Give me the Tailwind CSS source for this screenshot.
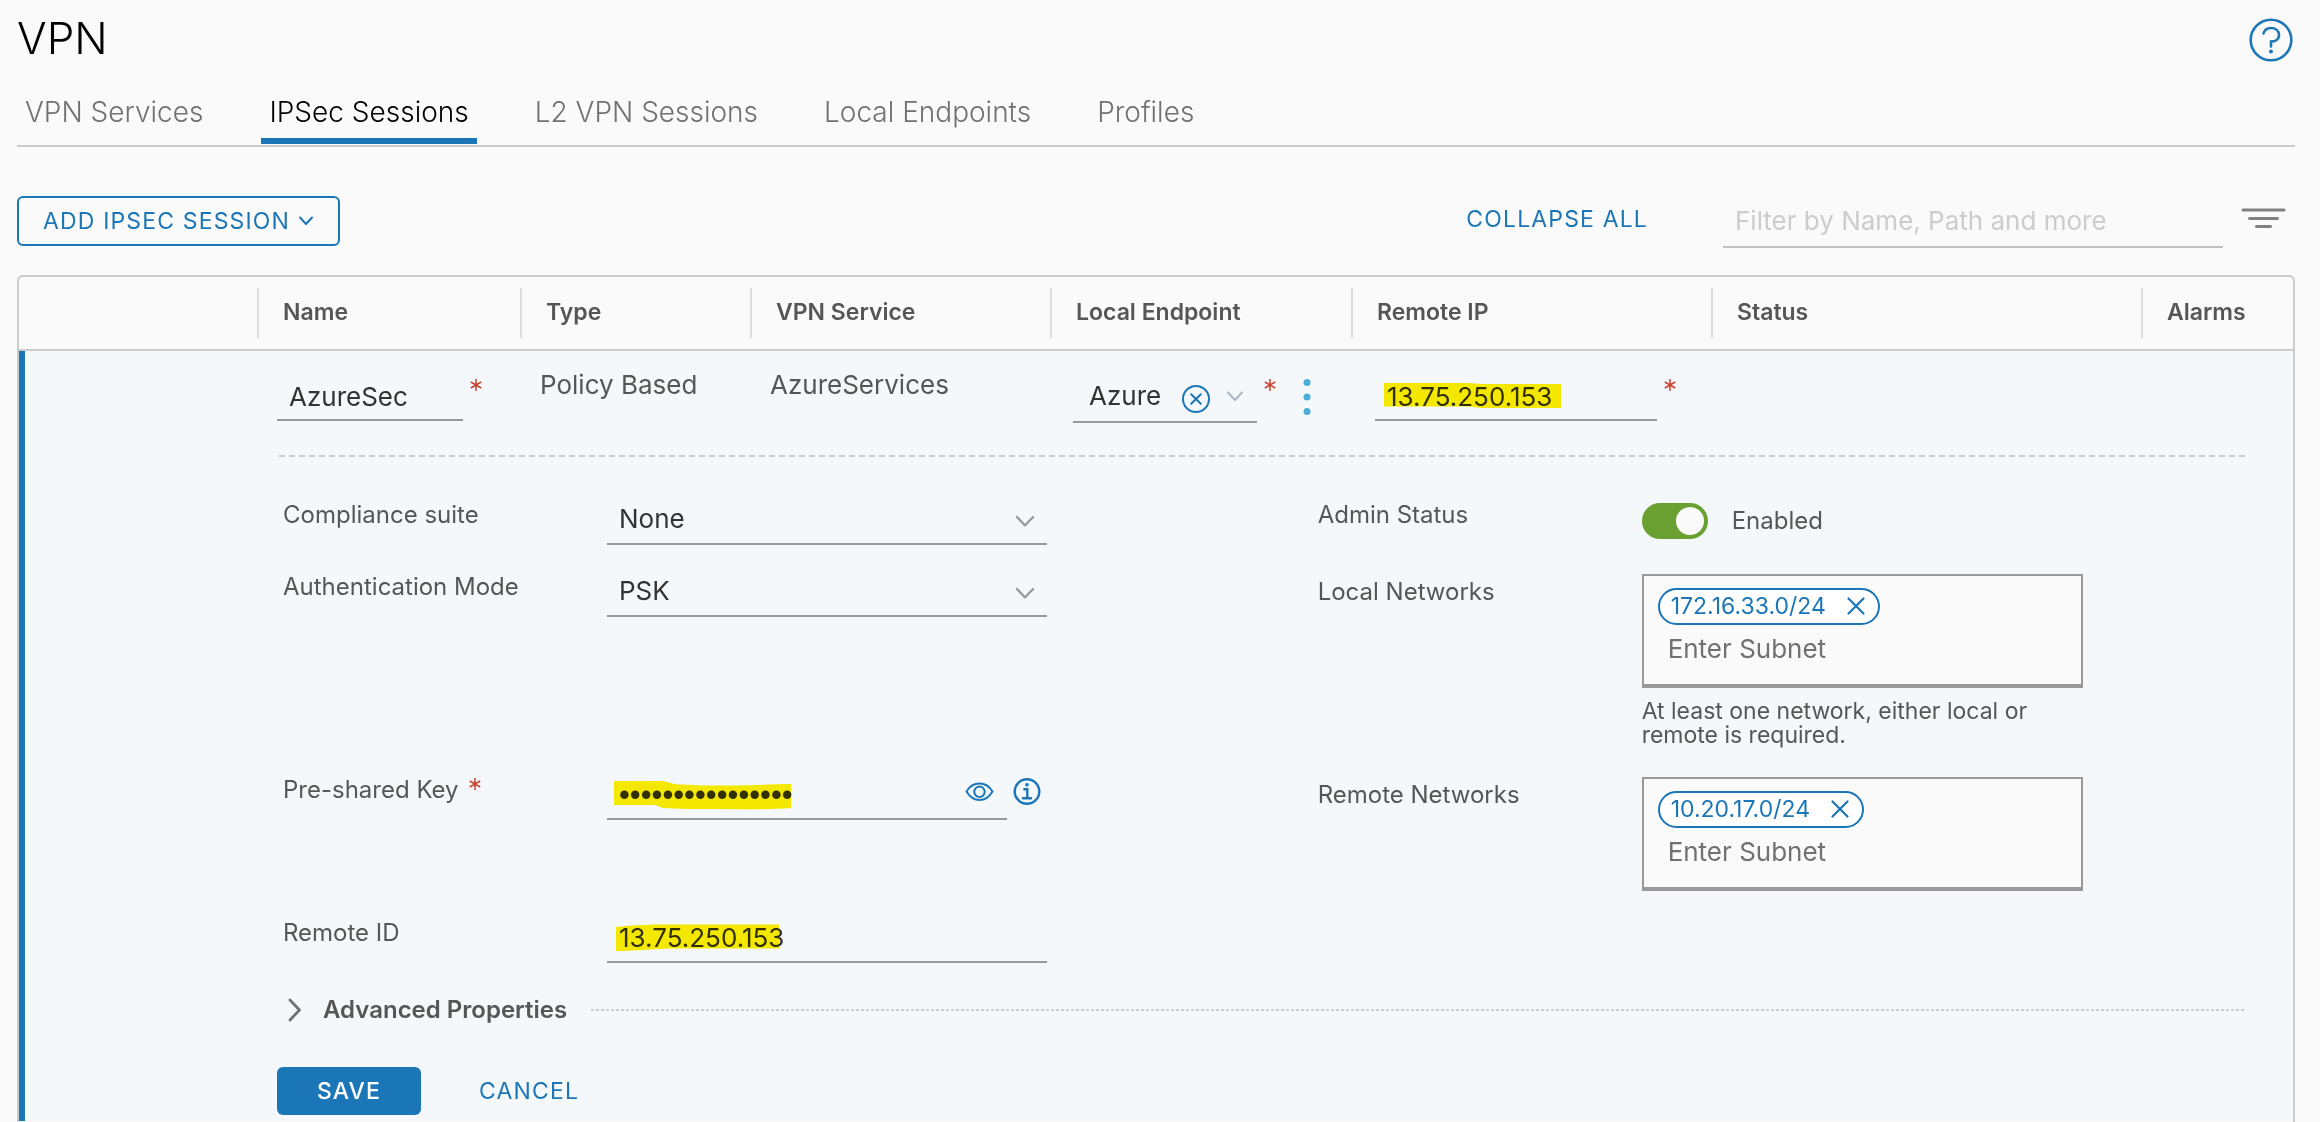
<!DOCTYPE html>
<html lang="en">
<head>
    <meta charset="UTF-8">
    <meta name="viewport" content="width=device-width, initial-scale=1.0">
    <title>VPN - IPSec Sessions</title>
    <script src="https://cdn.jsdelivr.net/npm/@tailwindcss/browser@4"></script>
</head>
<body class="bg-[#fafafa] font-['Inter','Open_Sans',sans-serif] text-[#565656]">
    <div class="min-h-screen flex flex-col pl-[17px] pr-[25px]">
        <!-- Header -->
        <header class="flex items-center justify-between h-20">
            <h1 class="pb-1 text-[44px] leading-[52px] font-light text-black">VPN</h1>
            <button type="button" aria-label="Help" class="text-[#1b76b7]">
                <svg class="w-12 h-12" viewBox="0 0 48 48" fill="none" stroke="currentColor" stroke-width="2.6" stroke-linecap="round">
                    <circle cx="24" cy="24" r="20.3"/>
                    <path d="M16.500 17.500c1-4 4-5.500 7.500-5.500 4.700 0 8 2.700 8 6.900 0 4.400-4 6.600-8 6.600v5"/>
                    <circle cx="24" cy="35.500" r="2" fill="currentColor" stroke="none"/>
                </svg>
            </button>
        </header>

        <!-- Tabs -->
        <nav class="flex gap-[50px] h-[67px] border-b-2 border-[#ccc] text-[28px] leading-8 font-light text-[#717171]">
            <a href="#" class="px-2 pt-4 mb-px">VPN Services</a>
            <a href="#" class="px-2 pt-4 mb-px border-b-6 border-[#1b76b7] text-black">IPSec Sessions</a>
            <a href="#" class="px-2 pt-4 mb-px">L2 VPN Sessions</a>
            <a href="#" class="px-2 pt-4 mb-px">Local Endpoints</a>
            <a href="#" class="px-2 pt-4 mb-px">Profiles</a>
        </nav>

        <!-- Toolbar -->
        <div class="flex items-start mt-12 mb-[27px] h-[53px] text-[#1b76b7]">
            <button type="button" class="flex items-center gap-2 h-[50px] mt-px px-6 border-2 border-[#1b76b7] rounded-md text-[23px] tracking-wider">
                ADD IPSEC SESSION
                <svg class="w-4 h-4" viewBox="0 0 16 16" fill="none" stroke="currentColor" stroke-width="2" stroke-linecap="round" stroke-linejoin="round"><path d="M2 4.500l6 6.500 6-6.500"/></svg>
            </button>
            <button type="button" class="h-12 ml-auto mr-[75px] text-[23px] tracking-wider">COLLAPSE ALL</button>
            <input type="text" aria-label="Filter" placeholder="Filter by Name, Path and more" class="w-[500px] h-full px-3 border-b-2 border-[#c1c1c1] bg-transparent text-[26px] text-[#333] placeholder:text-[#ccc] outline-none">
            <button type="button" aria-label="Filter options" class="flex items-center h-12 ml-4 mr-2 text-[#808080]">
                <svg class="w-12 h-8" viewBox="0 0 48 32" fill="none" stroke="currentColor" stroke-width="3" stroke-linecap="round"><path d="M4 7h41M10.500 15.500h28M17.500 23.500h14"/></svg>
            </button>
        </div>

        <!-- Sessions -->
        <div class="flex-1 border-2 border-b-0 border-[#ccc] rounded-t-md overflow-hidden">
            <table class="w-full table-fixed border-separate border-spacing-0 text-left">
                <colgroup>
                    <col class="w-[238px]">
                    <col class="w-[263px]">
                    <col class="w-[230px]">
                    <col class="w-[300px]">
                    <col class="w-[301px]">
                    <col class="w-[360px]">
                    <col>
                    <col class="w-[152px]">
                </colgroup>
                <thead class="text-[23px] leading-[48px]">
                    <tr>
                        <td class="h-[74px] p-0 border-b-2 border-[#ccc]"></td>
                        <th class="p-0 border-b-2 border-[#ccc] font-semibold"><div class="pl-6 pb-0.5 border-l-2 border-[#ddd]">Name</div></th>
                        <th class="p-0 border-b-2 border-[#ccc] font-semibold"><div class="pl-6 pb-0.5 border-l-2 border-[#ddd]">Type</div></th>
                        <th class="p-0 border-b-2 border-[#ccc] font-semibold"><div class="pl-6 pb-0.5 border-l-2 border-[#ddd]">VPN Service</div></th>
                        <th class="p-0 border-b-2 border-[#ccc] font-semibold"><div class="pl-6 pb-0.5 border-l-2 border-[#ddd]">Local Endpoint</div></th>
                        <th class="p-0 border-b-2 border-[#ccc] font-semibold"><div class="pl-6 pb-0.5 border-l-2 border-[#ddd]">Remote IP</div></th>
                        <th class="p-0 border-b-2 border-[#ccc] font-semibold"><div class="pl-6 pb-0.5 border-l-2 border-[#ddd]">Status</div></th>
                        <th class="p-0 border-b-2 border-[#ccc] font-semibold"><div class="pl-6 pb-0.5 border-l-2 border-[#ddd]">Alarms</div></th>
                    </tr>
                </thead>
                <tbody class="bg-[#f4f8fb] text-[26px] leading-8 align-top">
                    <tr>
                        <td class="h-[104px] p-0 border-l-6 border-[#1b76b7]"></td>
                        <td class="p-0 pl-5 pt-[22px]">
                            <div class="flex gap-[7px]">
                                <input type="text" aria-label="Name" value="AzureSec" class="w-[186px] h-12 px-3 border-b-2 border-[#999] bg-transparent text-[#333] outline-none">
                                <svg class="w-3 h-3 mt-1.5" viewBox="0 0 12 12" fill="none" stroke="#c9402c" stroke-width="1.500"><path d="M6 0v12M.800 3l10.400 6M.800 9l10.400-6"/></svg>
                            </div>
                        </td>
                        <td class="p-0 pl-5 pt-[18px]">Policy Based</td>
                        <td class="p-0 pl-5 pt-[18px]">AzureServices</td>
                        <td class="p-0 pl-[23px] pt-[22px]">
                            <div class="flex gap-[7px]">
                                <div class="relative w-[184px]">
                                    <select aria-label="Local endpoint" class="appearance-none w-full h-[50px] pl-4 pb-0.5 border-b-2 border-[#999] bg-transparent text-[#333] outline-none">
                                        <option>Azure</option>
                                    </select>
                                    <button type="button" aria-label="Clear endpoint" class="absolute left-[109px] top-3 text-[#1b76b7]">
                                        <svg class="w-7 h-7" viewBox="0 0 28 28" fill="none" stroke="currentColor" stroke-width="2" stroke-linecap="round"><circle cx="14" cy="14" r="13"/><path d="M9.200 9.200l9.600 9.600M18.800 9.200l-9.600 9.600"/></svg>
                                    </button>
                                    <svg class="absolute right-3 top-[14px] w-5 h-5 pointer-events-none" viewBox="0 0 20 20" fill="none" stroke="#adbbc4" stroke-width="2.200" stroke-linecap="round" stroke-linejoin="round"><path d="M3 5.500l7 7.500 7-7.500"/></svg>
                                </div>
                                <svg class="w-3 h-3 mt-1.5" viewBox="0 0 12 12" fill="none" stroke="#c9402c" stroke-width="1.500"><path d="M6 0v12M.800 3l10.400 6M.800 9l10.400-6"/></svg>
                                <button type="button" aria-label="Endpoint actions" class="ml-3 pt-1 self-start text-[#49afd9]">
                                    <svg class="w-6 h-10" viewBox="0 0 24 40" fill="currentColor"><circle cx="12" cy="5.500" r="3.500"/><circle cx="12" cy="20" r="3.500"/><circle cx="12" cy="34.500" r="3.500"/></svg>
                                </button>
                            </div>
                        </td>
                        <td class="p-0 pl-6 pt-[22px]">
                            <div class="relative flex gap-[7px]">
                                <input type="text" aria-label="Remote IP" value="13.75.250.153" class="w-[282px] h-12 px-3 border-b-2 border-[#999] bg-transparent text-[#333] outline-none">
                                <svg class="absolute left-2 top-2 w-[180px] h-8 mix-blend-multiply pointer-events-none" viewBox="0 0 180 32"><path d="M1 2h84l14 1h79v24h-79l-14-1.500H1z" fill="#ffef00"/></svg>
                                <svg class="w-3 h-3 mt-1.5" viewBox="0 0 12 12" fill="none" stroke="#c9402c" stroke-width="1.500"><path d="M6 0v12M.800 3l10.400 6M.800 9l10.400-6"/></svg>
                            </div>
                        </td>
                        <td class="p-0"></td>
                        <td class="p-0"></td>
                    </tr>
                    <tr>
                        <td colspan="8" class="p-0 pl-[252px] pr-12 border-l-6 border-[#1b76b7]">
                            <div class="ml-0.5 border-t-2 border-dashed border-[#ccc]"></div>
                            <form class="pt-10 pb-1.5">
                                <div class="flex pl-1.5">
                                    <!-- Left column -->
                                    <div class="flex flex-col gap-6">
                                        <div class="flex">
                                            <label for="suite" class="w-[324px] pt-0.5 text-[24px]">Compliance suite</label>
                                            <div class="relative w-[440px]">
                                                <select id="suite" class="appearance-none w-full h-12 px-3 pb-0.5 border-b-2 border-[#999] bg-transparent text-[#333] outline-none">
                                                    <option>None</option>
                                                </select>
                                                <svg class="absolute right-3 top-[14px] w-5 h-5 pointer-events-none" viewBox="0 0 20 20" fill="none" stroke="#999" stroke-width="2.400" stroke-linecap="round" stroke-linejoin="round"><path d="M2 6l8 8.500L18 6"/></svg>
                                            </div>
                                        </div>
                                        <div class="flex">
                                            <label for="auth" class="w-[324px] pt-0.5 text-[24px]">Authentication Mode</label>
                                            <div class="relative w-[440px]">
                                                <select id="auth" class="appearance-none w-full h-12 px-3 pb-0.5 border-b-2 border-[#999] bg-transparent text-[#333] outline-none">
                                                    <option>PSK</option>
                                                </select>
                                                <svg class="absolute right-3 top-[14px] w-5 h-5 pointer-events-none" viewBox="0 0 20 20" fill="none" stroke="#999" stroke-width="2.400" stroke-linecap="round" stroke-linejoin="round"><path d="M2 6l8 8.500L18 6"/></svg>
                                            </div>
                                        </div>
                                        <div class="flex mt-[131px]">
                                            <label for="psk" class="flex gap-2.5 w-[324px] pt-0.5 text-[24px]">Pre-shared Key
                                                <svg class="w-3 h-3 mt-1" viewBox="0 0 12 12" fill="none" stroke="#c9402c" stroke-width="1.500"><path d="M6 0v12M.800 3l10.400 6M.800 9l10.400-6"/></svg>
                                            </label>
                                            <div class="relative flex gap-[5px]">
                                                <input id="psk" type="password" value="presharedkey1234" class="w-[400px] h-12 pl-3 pr-14 border-b-2 border-[#999] bg-transparent font-['Liberation_Sans',sans-serif] text-[31px] text-[#333] outline-none">
                                                <svg class="absolute left-[7px] top-2 w-[178px] h-8 mix-blend-multiply pointer-events-none" viewBox="0 0 178 32"><path d="M0 1h48c8 1 10 3.500 20 3.500 14 1 30 1 40 1 30 0 50-1.500 69-1.500v24c-20 1.500-50 1.500-74 1-20 0-40 0-54-1-4-1-6-3-9-3H0z" fill="#ffef00"/></svg>
                                                <button type="button" aria-label="Show key" class="absolute left-[357px] top-2 text-[#1b76b7]">
                                                    <svg class="w-8 h-6" viewBox="0 0 32 24" fill="none" stroke="currentColor" stroke-width="2"><path d="M2.500 11.500C5.500 6.500 10 3.500 15.500 3.500S25.500 6.500 28.500 11.500C25.500 16.500 21 20 15.500 20S5.500 16.500 2.500 11.500z"/><circle cx="15.500" cy="11.800" r="5.200"/></svg>
                                                </button>
                                                <button type="button" aria-label="Key information" class="self-start mt-[5px] text-[#1b76b7]">
                                                    <svg class="w-[30px] h-[30px]" viewBox="0 0 30 30" fill="none" stroke="currentColor" stroke-width="2.400" stroke-linecap="round"><circle cx="15" cy="14.500" r="12.300"/><path d="M12.300 12.200h3v8.800M11 21.200h8"/><circle cx="15" cy="7.800" r="1.800" fill="currentColor" stroke="none"/></svg>
                                                </button>
                                            </div>
                                        </div>
                                        <div class="flex mt-[71px]">
                                            <label for="remote-id" class="w-[324px] pt-0.5 text-[24px]">Remote ID</label>
                                            <div class="relative w-[440px]">
                                                <input id="remote-id" type="text" value="13.75.250.153" class="w-full h-12 px-3 pb-0.5 border-b-2 border-[#999] bg-transparent text-[#333] outline-none">
                                                <svg class="absolute left-2 top-2 w-[165px] h-8 mix-blend-multiply pointer-events-none" viewBox="0 0 165 32"><path d="M1 4c12-1.500 30-2.500 44-2.500h119v24H60c-20 0-36 2.500-59 2.500z" fill="#ffef00"/></svg>
                                            </div>
                                        </div>
                                    </div>
                                    <div class="grow-5"></div>
                                    <!-- Right column -->
                                    <div class="flex flex-col">
                                        <div class="flex">
                                            <label for="admin" class="w-[324px] pt-0.5 text-[24px]">Admin Status</label>
                                            <div class="flex items-center gap-6 w-[441px] h-12 text-[24px]">
                                                <input id="admin" type="checkbox" checked class="appearance-none w-[66px] h-9 rounded-full bg-[#999] checked:bg-[#69a031] before:content-[''] before:block before:w-7 before:h-7 before:m-1 before:rounded-full before:bg-[#fafafa] checked:before:ml-[34px]">
                                                <span>Enabled</span>
                                            </div>
                                        </div>
                                        <div class="flex mt-[29px]">
                                            <label for="local-net" class="w-[324px] pt-0.5 text-[24px]">Local Networks</label>
                                            <div class="w-[441px]">
                                                <div class="flex flex-col items-start gap-2 h-[114px] pl-[14px] pt-3 border-2 border-b-4 border-[#999] bg-[#fafafa]">
                                                    <span class="flex items-center gap-5 h-[37px] pl-[11px] pr-3 pb-0.5 border-2 border-[#1b76b7] rounded-full bg-white text-[23px] text-[#1b76b7]">172.16.33.0/24
                                                        <button type="button" aria-label="Remove 172.16.33.0/24"><svg class="w-5 h-5" viewBox="0 0 20 20" fill="none" stroke="currentColor" stroke-width="2.200" stroke-linecap="round"><path d="M2.500 2.500l15 15M17.500 2.500l-15 15"/></svg></button>
                                                    </span>
                                                    <input id="local-net" type="text" placeholder="Enter Subnet" class="w-full h-8 pl-[10px] bg-transparent placeholder:text-[#717171] outline-none">
                                                </div>
                                                <p class="mt-[11px] text-[23px] leading-6">At least one network, either local or remote is required.</p>
                                            </div>
                                        </div>
                                        <div class="flex mt-[30px]">
                                            <label for="remote-net" class="w-[324px] pt-0.5 text-[24px]">Remote Networks</label>
                                            <div class="w-[441px]">
                                                <div class="flex flex-col items-start gap-2 h-[114px] pl-[14px] pt-3 border-2 border-b-4 border-[#999] bg-[#fafafa]">
                                                    <span class="flex items-center gap-5 h-[37px] pl-[11px] pr-3 pb-0.5 border-2 border-[#1b76b7] rounded-full bg-white text-[23px] text-[#1b76b7]">10.20.17.0/24
                                                        <button type="button" aria-label="Remove 10.20.17.0/24"><svg class="w-5 h-5" viewBox="0 0 20 20" fill="none" stroke="currentColor" stroke-width="2.200" stroke-linecap="round"><path d="M2.500 2.500l15 15M17.500 2.500l-15 15"/></svg></button>
                                                    </span>
                                                    <input id="remote-net" type="text" placeholder="Enter Subnet" class="w-full h-8 pl-[10px] bg-transparent placeholder:text-[#717171] outline-none">
                                                </div>
                                            </div>
                                        </div>
                                    </div>
                                    <div class="grow-3"></div>
                                </div>

                                <!-- Advanced -->
                                <div class="flex items-center gap-6 mt-[31px]">
                                    <button type="button" class="flex items-center gap-[18px] pl-2 text-[24px] font-semibold">
                                        <svg class="w-5 h-6" viewBox="0 0 20 24" fill="none" stroke="#717171" stroke-width="2.800" stroke-linecap="round" stroke-linejoin="round"><path d="M5 2l9.500 10L5 22"/></svg>
                                        Advanced Properties
                                    </button>
                                    <div class="grow h-0.5 bg-[repeating-linear-gradient(90deg,#ccc_0_3px,transparent_3px_5px)]"></div>
                                </div>

                                <div class="flex mt-[41px] gap-[58px] text-[23px] tracking-wider">
                                    <button type="submit" class="w-36 h-12 rounded-md bg-[#1b76b7] font-medium text-white">SAVE</button>
                                    <button type="button" class="text-[#1b76b7]">CANCEL</button>
                                </div>
                            </form>
                        </td>
                    </tr>
                </tbody>
            </table>
        </div>
    </div>
</body>
</html>
